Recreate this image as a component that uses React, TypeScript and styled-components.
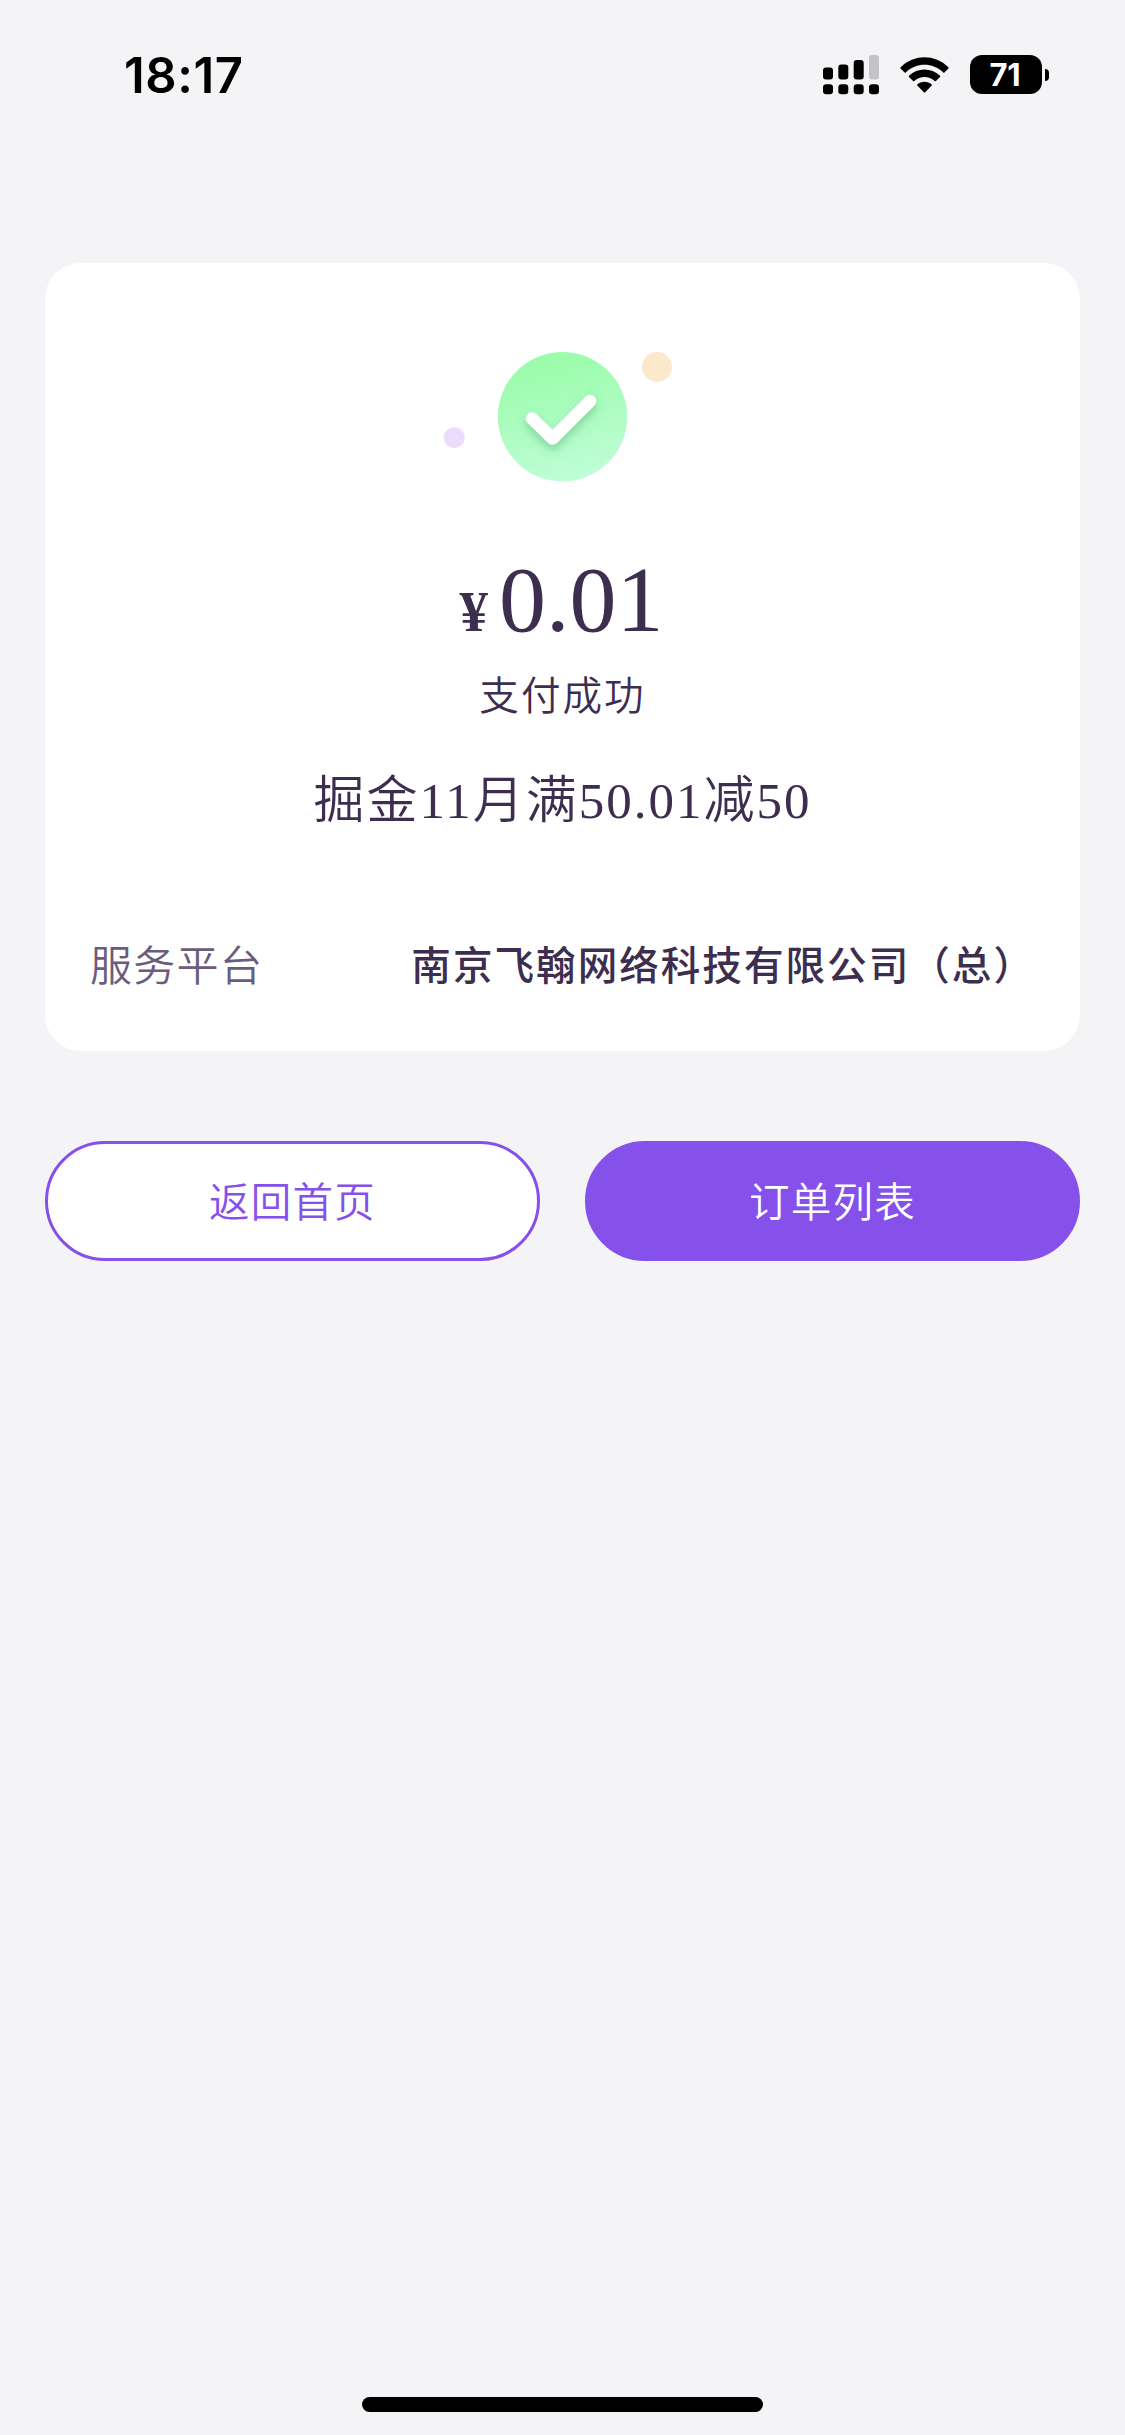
import React from "react";
import styled, { createGlobalStyle } from "styled-components";

const GlobalStyle = createGlobalStyle`
  * { box-sizing: border-box; }
  body { margin: 0; background: #f4f4f7; }
`;

const Screen = styled.div`
  width: 1125px;
  height: 2435px;
  display: flex;
  flex-direction: column;
  overflow: hidden;
  background: #f4f4f7;
  color: #3d2e4f;
  font-family: "Liberation Serif", "Noto Sans CJK SC", serif;
  font-weight: 350;
`;

const StatusBar = styled.header`
  height: 149px;
  padding: 0 76px 0 124px;
  display: flex;
  align-items: center;
  justify-content: space-between;
  color: #000;
  font-family: Inter, sans-serif;
`;

const Time = styled.span`
  padding-top: 2px;
  font-size: 49px;
  font-weight: 600;
  line-height: 60px;
  letter-spacing: 0.6px;
`;

const StatusIcons = styled.div`
  display: flex;
  align-items: center;
  gap: 21px;
`;

const Battery = styled.div`
  display: flex;
  align-items: center;
  gap: 3px;
`;

const BatteryBody = styled.div`
  width: 72px;
  height: 39px;
  padding-right: 2px;
  border-radius: 12px;
  background: #000;
  color: #fff;
  font-size: 31px;
  font-weight: 650;
  line-height: 39px;
  letter-spacing: -0.3px;
  text-align: center;
`;

const BatteryTip = styled.div`
  width: 4px;
  height: 12px;
  border-radius: 0 5px 5px 0;
  background: #000;
`;

const Card = styled.main`
  margin: 114px 45px 0;
  height: 788px;
  padding: 67px 45px 0;
  display: flex;
  flex-direction: column;
  align-items: center;
  border-radius: 36px;
  background: #fff;
`;

const SuccessArt = styled.svg`
  display: block;
  width: 285px;
  height: 170px;
`;

const Amount = styled.div`
  margin-top: 45px;
  height: 108px;
  display: flex;
  align-items: baseline;
  line-height: 108px;
`;

const Currency = styled.span`
  font-size: 57px;
  font-weight: 700;
  letter-spacing: 2px;
  margin-right: 9px;
`;

const Figure = styled.span`
  margin-right: 2px;
  font-size: 94px;
`;

const State = styled.div`
  margin-top: 14px;
  font-size: 39.6px;
  line-height: 60px;
  letter-spacing: 2px;
`;

const Title = styled.div`
  margin-top: 38px;
  font-size: 51px;
  line-height: 72px;
  letter-spacing: 2px;
`;

const InfoRow = styled.div`
  width: 100%;
  margin-top: 97px;
  display: flex;
  align-items: center;
  justify-content: space-between;
  line-height: 66px;
`;

const InfoLabel = styled.span`
  color: #6b5c7b;
  font-size: 42px;
  letter-spacing: 1.3px;
`;

const InfoValue = styled.span`
  font-size: 39.6px;
  font-weight: 500;
  letter-spacing: 2px;
`;

const Actions = styled.nav`
  margin: 90px 45px 0;
  display: grid;
  grid-template-columns: 1fr 1fr;
  gap: 45px;
`;

const ActionButton = styled.button<{ $primary?: boolean }>`
  height: 120px;
  padding: 0 0 4px;
  border: 3px solid #8651ea;
  border-radius: 60px;
  background: ${(p) => (p.$primary ? "#8651ea" : "#fff")};
  color: ${(p) => (p.$primary ? "#fff" : "#8651ea")};
  font-family: inherit;
  font-size: 40.5px;
  font-weight: 350;
  letter-spacing: 1.2px;
`;

const HomeIndicator = styled.div`
  width: 401px;
  height: 15px;
  margin: auto auto 23px;
  border-radius: 8px;
  background: #000;
`;

const bars = [
  { x: 0, y: 12.5, h: 12 },
  { x: 15.3, y: 9.5, h: 15 },
  { x: 30.7, y: 5, h: 19.5 },
  { x: 46, y: 0, h: 24.5 },
];

function Signal() {
  return (
    <svg width="56" height="40" viewBox="0 0 56 40">
      {bars.map((b, i) => (
        <g key={b.x}>
          <rect x={b.x} y={b.y} width="10" height={b.h} rx="3" fill={i === 3 ? "#c4c4c6" : "#000"} />
          <rect x={b.x} y="29.3" width="10" height="10" rx="3.2" />
        </g>
      ))}
    </svg>
  );
}

function Wifi() {
  return (
    <svg width="49" height="36" viewBox="0 0 49 36">
      <path d="M.6 10.2C14-3.1 35-3.1 48.4 10.2q.6.6 0 1.2l-4 4q-.6.6-1.2 0C32.6 5.3 16.4 5.3 5.8 15.4q-.6.6-1.2 0l-4-4q-.6-.6 0-1.2Z" />
      <path d="M9 18.7c8.7-8.3 22.3-8.3 31 0q.6.6 0 1.2l-4.1 4q-.6.6-1.2 0c-5.800-5.300-14.600-5.300-20.400 0q-.6.6-1.2 0l-4.1-4q-.6-.6 0-1.2Z" />
      <path d="M17.3 27.4c4-3.600 10.400-3.600 14.400 0q.6.6 0 1.2l-6.500 6.600q-.7.6-1.4 0l-6.500-6.600q-.6-.6 0-1.2Z" />
    </svg>
  );
}

function Success() {
  return (
    <SuccessArt viewBox="0 0 285 170">
      <defs>
        <linearGradient id="disc" x1="0.38" y1="0" x2="0.62" y2="1">
          <stop offset="0.1" stopColor="#9cfcac" />
          <stop offset="1" stopColor="#c0fdd8" />
        </linearGradient>
        <filter id="shade" x="-30%" y="-30%" width="160%" height="180%">
          <feDropShadow dx="0" dy="5" stdDeviation="5" floodColor="#4fae72" floodOpacity="0.5" />
        </filter>
      </defs>
      <circle cx="34.3" cy="107.7" r="10.5" fill="#ecdcfc" />
      <circle cx="237" cy="37" r="15" fill="#fce8cb" />
      <circle cx="142.5" cy="86.7" r="64.7" fill="url(#disc)" />
      <path
        d="M112 88.5 132.5 108.5 170 71"
        fill="none"
        stroke="#fff"
        strokeWidth="12.5"
        strokeLinecap="round"
        strokeLinejoin="round"
        filter="url(#shade)"
      />
    </SuccessArt>
  );
}

export default function App() {
  return (
    <Screen>
      <GlobalStyle />
      <StatusBar>
        <Time>18:17</Time>
        <StatusIcons>
          <Signal />
          <Wifi />
          <Battery>
            <BatteryBody>71</BatteryBody>
            <BatteryTip />
          </Battery>
        </StatusIcons>
      </StatusBar>
      <Card>
        <Success />
        <Amount>
          <Currency>¥</Currency>
          <Figure>0.01</Figure>
        </Amount>
        <State>支付成功</State>
        <Title>掘金11月满50.01减50</Title>
        <InfoRow>
          <InfoLabel>服务平台</InfoLabel>
          <InfoValue>南京飞翰网络科技有限公司（总）</InfoValue>
        </InfoRow>
      </Card>
      <Actions>
        <ActionButton>返回首页</ActionButton>
        <ActionButton $primary>订单列表</ActionButton>
      </Actions>
      <HomeIndicator />
    </Screen>
  );
}
